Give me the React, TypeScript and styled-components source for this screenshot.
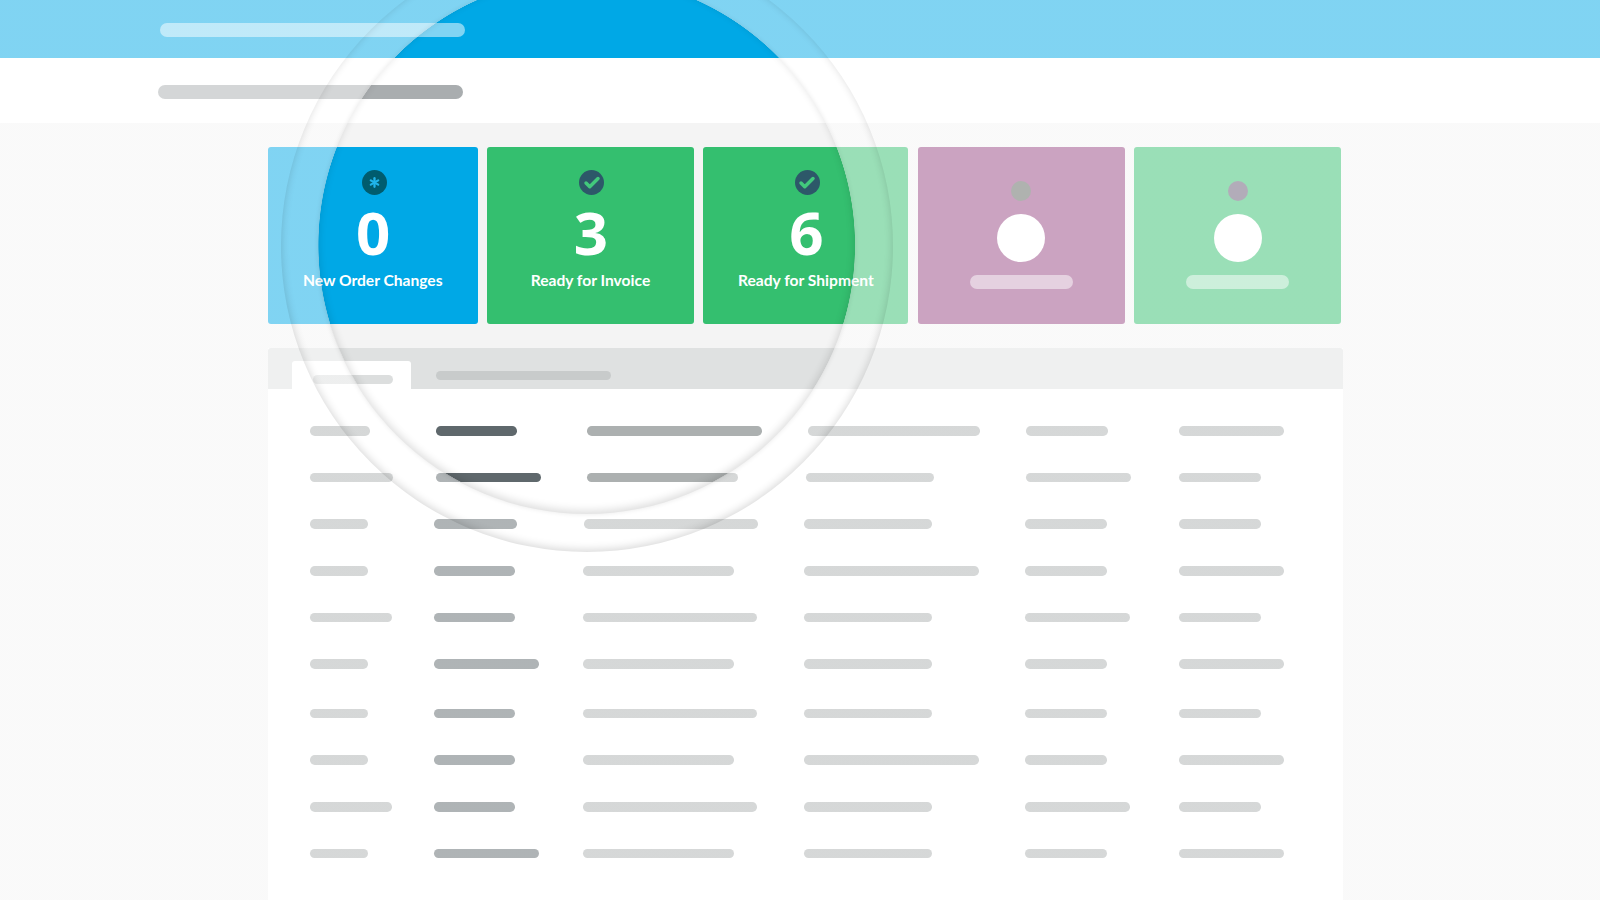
import React from "react";
import styled, { createGlobalStyle } from "styled-components";
import { Asterisk, Check } from "lucide-react";

// Table skeleton: each cell is [bar width, nudge from the column start]
type Cell = [number, number?];

const rows: { cells: Cell[]; lower?: boolean }[] = [
  { cells: [[60], [81, 2.6], [175, 4], [172, 4], [82, 1], [105]] },
  { cells: [[83], [105, 2.6], [151, 4], [128, 2], [105, 1], [82]] },
  { cells: [[58], [83.5, 0.4], [174, 1.8], [128], [82], [82]] },
  { cells: [[58], [81.5, 0.4], [151], [175], [82], [105]] },
  { cells: [[81.5], [81.5, 0.4], [174.5], [128], [105], [82]] },
  { cells: [[58], [105, 0.4], [151], [128], [82], [105]] },
  { cells: [[58], [81.5, 0.4], [174.5], [128], [82], [82]], lower: true },
  { cells: [[58], [81.5, 0.4], [151], [175], [82], [105]] },
  { cells: [[81.5], [81.5, 0.4], [174.5], [128], [105], [82]] },
  { cells: [[58], [105, 0.4], [151], [128], [82], [105]] },
];

const stats = [
  { id: "changes", count: 0, label: "New Order Changes", color: "#00a8e6", width: 209.5, asterisk: true },
  { id: "invoice", count: 3, label: "Ready for Invoice", color: "#34bf6f", width: 207.5 },
  { id: "shipment", count: 6, label: "Ready for Shipment", color: "#34bf6f", width: 205 },
];

const App: React.FC = () => {
  return (
    <Page>
      <GlobalStyle />
      <TopBar>
        <TopPill />
      </TopBar>
      <SubBar>
        <SubPill />
      </SubBar>
      <Content>
        <Cards>
          {stats.map((stat) => (
            <StatCard key={stat.id} $color={stat.color} $width={stat.width}>
              <Badge $asterisk={stat.asterisk}>
                {stat.asterisk ? (
                  <Asterisk size={17} strokeWidth={3.2} color="#20b5ea" />
                ) : (
                  <Check size={18} strokeWidth={4.6} color="#42c97c" />
                )}
              </Badge>
              <Count>{stat.count}</Count>
              <Label>{stat.label}</Label>
            </StatCard>
          ))}
          <BlankCard $color="#974783" $width={207.5}>
            <BlankDot $color="#5f655f" />
            <BlankCircle />
            <BlankPill />
          </BlankCard>
          <BlankCard $color="#34bf6f" $width={207}>
            <BlankDot $color="#655973" />
            <BlankCircle />
            <BlankPill />
          </BlankCard>
        </Cards>
        <Panel>
          <TabBar>
            <ActiveTab>
              <ActiveTabPill />
            </ActiveTab>
            <TabPill />
          </TabBar>
          <TableBody>
            {rows.map((row, i) => (
              <Row key={i} $lower={row.lower}>
                {row.cells.map(([width, nudge], j) => (
                  <Bar key={j} $width={width} $nudge={nudge ?? 0} $dark={j === 1} />
                ))}
              </Row>
            ))}
          </TableBody>
        </Panel>
      </Content>
      <Veil />
      <OuterRing />
      <InnerRing />
    </Page>
  );
};

export default App;

const GlobalStyle = createGlobalStyle`
  html, body {
    margin: 0;
    padding: 0;
    background: #f4f4f4;
    font-family: "Lato", "Noto Sans", sans-serif;
  }
`;

const Page = styled.div`
  position: relative;
  width: 1600px;
  height: 900px;
  overflow: hidden;
  background: #f4f4f4;
  display: flex;
  flex-direction: column;
`;

const TopBar = styled.div`
  height: 57.5px;
  flex: none;
  background: #00a8e6;
  padding: 23px 0 0 160.2px;
  box-sizing: border-box;
`;

const TopPill = styled.div`
  width: 305px;
  height: 14px;
  border-radius: 7px;
  background: rgba(255, 255, 255, 0.5);
`;

const SubBar = styled.div`
  height: 65px;
  flex: none;
  background: #fff;
  padding: 27.5px 0 0 157.6px;
  box-sizing: border-box;
`;

const SubPill = styled.div`
  width: 305px;
  height: 14px;
  border-radius: 7px;
  background: #a9adaf;
`;

const Content = styled.div`
  flex: 1;
  min-height: 0;
  padding: 24.2px 0 0 268px;
  display: flex;
  flex-direction: column;
`;

const Cards = styled.div`
  display: flex;
  gap: 9.2px;
`;

const Tile = styled.div<{ $color: string; $width: number }>`
  width: ${(p) => p.$width}px;
  height: 177px;
  flex: none;
  border-radius: 3px;
  background: ${(p) => p.$color};
  display: flex;
  flex-direction: column;
  align-items: center;
  box-sizing: border-box;
`;

const StatCard = styled(Tile)`
  padding-top: 23.4px;
  color: #fff;
`;

const Badge = styled.div<{ $asterisk?: boolean }>`
  width: 25px;
  height: 25px;
  border-radius: 50%;
  margin-left: 3px;
  background: ${(p) => (p.$asterisk ? "#005c6e" : "#2d5869")};
  display: flex;
  align-items: center;
  justify-content: center;
`;

const Count = styled.div`
  margin: 11.5px 0 0 1px;
  font-family: "Noto Sans", sans-serif;
  font-size: 60px;
  font-weight: 700;
  line-height: 50px;
`;

const Label = styled.div`
  margin-top: 13px;
  font-size: 15.6px;
  font-weight: 700;
  line-height: 20px;
  white-space: nowrap;
`;

const BlankCard = styled(Tile)`
  padding-top: 34px;
`;

const BlankDot = styled.div<{ $color: string }>`
  width: 20px;
  height: 20px;
  border-radius: 50%;
  background: ${(p) => p.$color};
`;

const BlankCircle = styled.div`
  width: 48px;
  height: 48px;
  margin-top: 13.5px;
  border-radius: 50%;
  background: #fff;
`;

const BlankPill = styled.div`
  width: 103px;
  height: 14px;
  margin-top: 13px;
  border-radius: 7px;
  background: rgba(255, 255, 255, 0.5);
`;

const Panel = styled.div`
  width: 1074.5px;
  flex: 1;
  margin-top: 24.3px;
  background: #fff;
  display: flex;
  flex-direction: column;
`;

const TabBar = styled.div`
  height: 41px;
  flex: none;
  background: #dfe1e1;
  border-radius: 3px 3px 0 0;
  display: flex;
`;

const ActiveTab = styled.div`
  width: 119px;
  height: 28px;
  margin: 13px 0 0 24px;
  background: #fff;
  border-radius: 3px 3px 0 0;
  padding: 14px 0 0 21px;
  box-sizing: border-box;
`;

const ActiveTabPill = styled.div`
  width: 80px;
  height: 9px;
  border-radius: 4.5px;
  background: #dcdede;
`;

const TabPill = styled.div`
  width: 175px;
  height: 9.5px;
  margin: 22.7px 0 0 24.5px;
  border-radius: 4.75px;
  background: #c8cbcb;
`;

const TableBody = styled.div`
  padding: 37.3px 0 0 42px;
  display: flex;
  flex-direction: column;
  gap: 37px;
`;

const Row = styled.div<{ $lower?: boolean }>`
  display: grid;
  grid-template-columns: 123.2px 149.5px 221px 221px 154.2px 1fr;
  margin-top: ${(p) => (p.$lower ? "2.9px" : "0")};
`;

const Bar = styled.div<{ $width: number; $nudge: number; $dark: boolean }>`
  width: ${(p) => p.$width}px;
  height: 9.6px;
  margin-left: ${(p) => p.$nudge}px;
  border-radius: 4.8px;
  background: ${(p) => (p.$dark ? "#5f686c" : "#acb0b0")};
`;

// White wash over everything except the round lens
const Veil = styled.div`
  position: absolute;
  inset: 0;
  background: radial-gradient(
    circle 268.5px at 586.7px 245px,
    rgba(255, 255, 255, 0) 99.8%,
    rgba(255, 255, 255, 0.5) 100%
  );
`;

const OuterRing = styled.div`
  position: absolute;
  left: 280.7px;
  top: -60px;
  width: 612px;
  height: 612px;
  border-radius: 50%;
  box-shadow: inset 0 -2px 9px rgba(0, 0, 0, 0.16);
`;

const InnerRing = styled.div`
  position: absolute;
  left: 318.2px;
  top: -23.5px;
  width: 537px;
  height: 537px;
  border-radius: 50%;
  box-shadow: inset 0 -3px 9px rgba(0, 0, 0, 0.14), 0 0 5px rgba(0, 0, 0, 0.09);
`;
